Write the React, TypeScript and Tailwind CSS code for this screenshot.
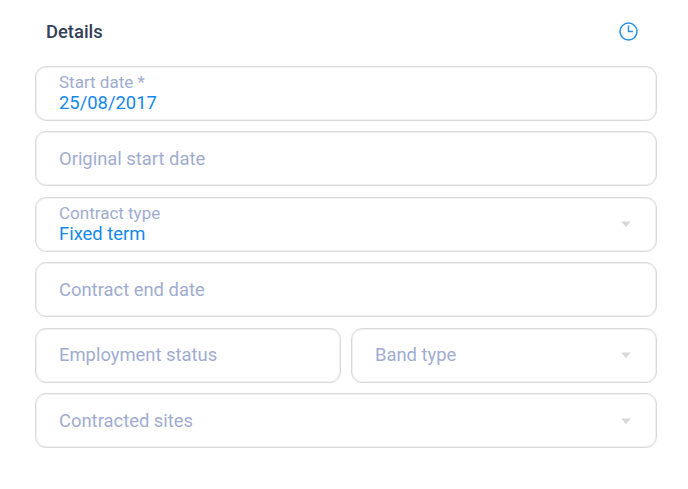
import React from "react";

const box = "h-[55px] rounded-[11px] border border-[#dadada] shadow-[inset_0_0_0_1px_#f1f1f1] flex items-center pl-[23px] pr-[25px] justify-between";

function Field({ label, value, arrow = false }: { label: string; value?: string; arrow?: boolean }) {
  return (
    <div className={box}>
      {value ? (
        <div className="pb-px">
          <div className="text-[17px] leading-5 text-[#a0acd0]">{label}</div>
          <div className="pt-px text-[18.4px] leading-5 text-[#1489ec]">{value}</div>
        </div>
      ) : (
        <div className="text-[18.4px] leading-5 text-[#a0acd0]">{label}</div>
      )}
      {arrow && (
        <svg width="10" height="6" viewBox="0 0 10 6" fill="#d8d8d8">
          <path d="M1 .5h8q.8 0 .3.6L5.6 5.4q-.6.6-1.2 0L.7 1.1Q.2.5 1 .5z" />
        </svg>
      )}
    </div>
  );
}

export default function App() {
  return (
    <div className="h-[489px] bg-white pl-[35px] pr-[31px] font-['Roboto',sans-serif]">
      <header className="flex h-[65.5px] items-center justify-between pl-[11px] pr-[19px] pb-[3px]">
        <h1 className="pt-px text-[18.4px] font-medium leading-6 text-[#343f58]">Details</h1>
        <svg width="19" height="19" viewBox="0 0 19 19" fill="none" stroke="#2a8fea" strokeWidth="1.5">
          <circle cx="9.5" cy="9.5" r="8.5" />
          <path d="M9.5 3.5v6H14" />
        </svg>
      </header>
      <main className="flex flex-col gap-[10.5px]">
        <Field label="Start date *" value="25/08/2017" />
        <Field label="Original start date" />
        <Field label="Contract type" value="Fixed term" arrow />
        <Field label="Contract end date" />
        <div className="grid grid-cols-2 gap-[10px]">
          <Field label="Employment status" />
          <Field label="Band type" arrow />
        </div>
        <Field label="Contracted sites" arrow />
      </main>
    </div>
  );
}
